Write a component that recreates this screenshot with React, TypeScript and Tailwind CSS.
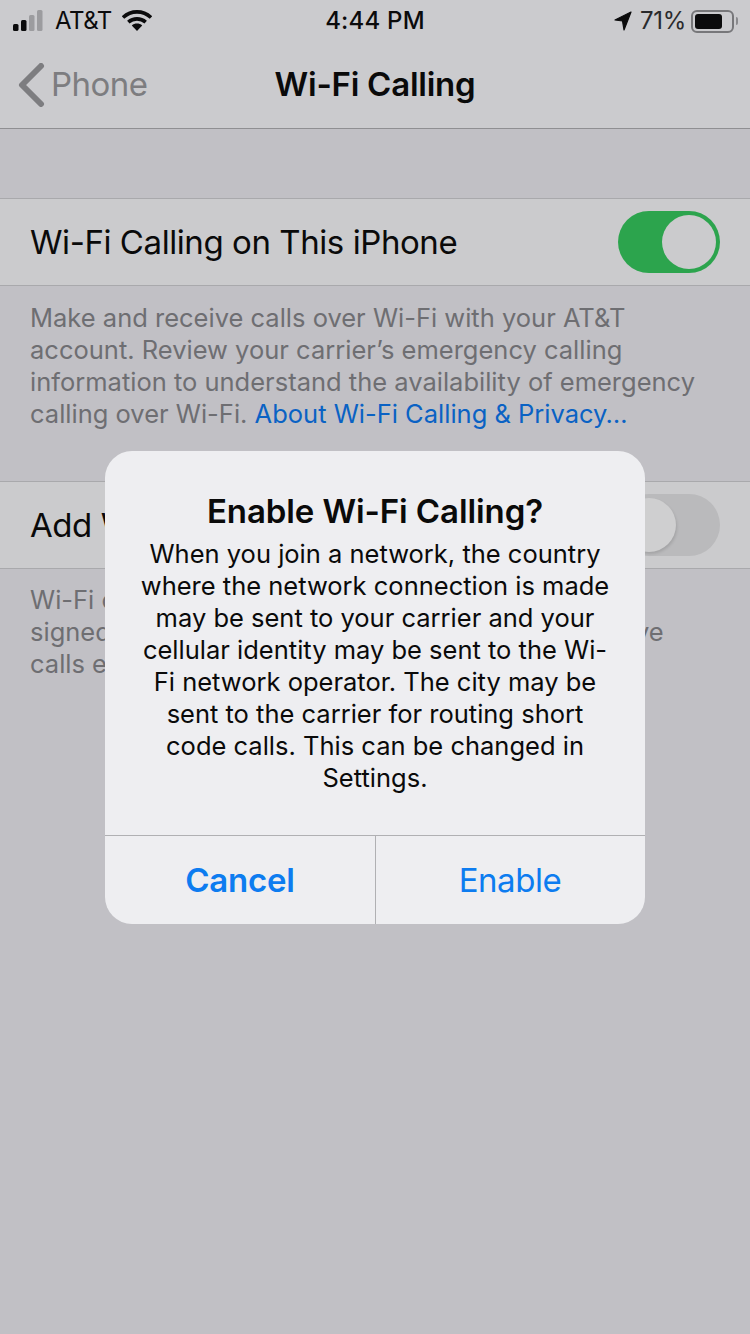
const font = { fontFamily: 'Inter, "Liberation Sans", sans-serif' };

function StatusBar() {
  return (
    <div className="relative flex h-10 items-center justify-between pl-[13px] pr-[12px] pt-[2px] text-[#0b0b0c]">
      <div className="flex items-center">
        <svg width="34" height="24" viewBox="0 0 34 24" className="mr-[8px]">
          <rect x="0" y="15" width="5.5" height="7" rx="1.5" fill="#0b0b0c" />
          <rect x="8" y="11" width="5.5" height="11" rx="1.5" fill="#0b0b0c" />
          <rect x="16" y="6" width="5.5" height="16" rx="1.5" fill="#9c9c9f" />
          <rect x="24" y="1" width="5.5" height="21" rx="1.5" fill="#9c9c9f" />
        </svg>
        <span className="text-[24px] leading-none tracking-[-0.5px]">AT&amp;T</span>
        <svg width="30" height="22" viewBox="0 0 30 22" className="ml-[10px]">
          <path d="M1 7.5 C9 0 21 0 29 7.5" fill="none" stroke="#0b0b0c" strokeWidth="3.6" />
          <path d="M6.3 12.2 C11.3 7.8 18.7 7.8 23.7 12.2" fill="none" stroke="#0b0b0c" strokeWidth="3.6" />
          <path d="M9.8 15.4 C12.6 12.8 17.4 12.8 20.2 15.4 L15 21 Z" fill="#0b0b0c" />
        </svg>
      </div>
      <span className="absolute left-0 right-0 text-center text-[24px] font-medium leading-none tracking-[0.2px]">4:44 PM</span>
      <div className="flex items-center">
        <svg width="18" height="20" viewBox="0 0 18 20" className="mr-[8px]">
          <path d="M17 1 L1 9 L8.5 10 L10 19 Z" fill="#0b0b0c" stroke="#0b0b0c" strokeWidth="1.2" strokeLinejoin="round" />
        </svg>
        <span className="text-[24px] leading-none tracking-[-0.3px] text-[#2a2a2c]">71%</span>
        <div className="ml-[5px] flex h-[23px] w-[43px] items-center rounded-[6px] border-2 border-[#77777a] p-[2px]">
          <div className="h-[15px] w-[27px] rounded-[3px] bg-[#0b0b0c]" />
        </div>
        <div className="ml-[2px] h-[8px] w-[2px] rounded-r-sm bg-[#8a8a8d]" />
      </div>
    </div>
  );
}

function Toggle({ on }: { on: boolean }) {
  return (
    <div className={`relative h-[62px] w-[102px] shrink-0 rounded-full ${on ? "bg-[#2ca44d]" : "bg-[#bababc]"}`}>
      <div className={`absolute top-[4px] h-[54px] w-[54px] rounded-full ${on ? "right-[4px] bg-[#cbcbcd]" : "left-[4px] bg-[#cfcfd0] shadow-[1px_2px_3px_rgba(0,0,0,0.12)]"}`} />
    </div>
  );
}

function Row({ title, on }: { title: string; on: boolean }) {
  return (
    <div className="flex h-[88px] items-center justify-between border-y border-[#a9a9ac] bg-[#cbcbcd] pl-[30px] pr-[30px]">
      <span className="text-[33px] leading-none tracking-[-0.43px] text-[#0a0a0a]">{title}</span>
      <Toggle on={on} />
    </div>
  );
}

function Dialog() {
  const lines = [
    "When you join a network, the country",
    "where the network connection is made",
    "may be sent to your carrier and your",
    "cellular identity may be sent to the Wi-",
    "Fi network operator. The city may be",
    "sent to the carrier for routing short",
    "code calls. This can be changed in",
    "Settings.",
  ];
  return (
    <div className="absolute left-[105px] top-[451px] flex h-[473px] w-[540px] flex-col overflow-hidden rounded-[27px] bg-[#eeeef1]">
      <div className="flex h-[385px] flex-col items-center border-b border-[#b0b0b3] pt-[40px] text-[#0a0a0a]">
        <div className="text-[33px] font-semibold leading-[40px] tracking-[-0.1px]">Enable Wi-Fi Calling?</div>
        <div className="mt-[7px] text-center text-[25.5px] leading-[32px] tracking-[0px]">
          {lines.map((l) => (
            <div key={l} className="whitespace-nowrap">{l}</div>
          ))}
        </div>
      </div>
      <div className="flex flex-1 text-[33px] leading-none text-[#0d7cf0]">
        <div className="flex w-[271px] items-center justify-center border-r border-[#b0b0b3] font-semibold tracking-[-0.2px]">Cancel</div>
        <div className="flex flex-1 items-center justify-center pr-[1px] tracking-[-0.45px]">Enable</div>
      </div>
    </div>
  );
}

export default function App() {
  return (
    <div className="relative h-[1334px] w-[750px] overflow-hidden bg-[#c1c0c5]" style={font}>
      <div className="h-[129px] border-b border-[#8f8f92] bg-[#cbcbce]">
        <StatusBar />
        <div className="relative flex h-[88px] items-center pt-[1px]">
          <svg width="28" height="44" viewBox="0 0 28 44" className="ml-[17px]">
            <path d="M24 3 L5 22 L24 41" fill="none" stroke="#7d7d80" strokeWidth="6" strokeLinecap="round" strokeLinejoin="round" />
          </svg>
          <span className="ml-[6px] text-[33px] leading-none tracking-[-0.55px] text-[#7d7d80]">Phone</span>
          <span className="absolute left-0 right-0 text-center text-[33px] font-semibold leading-none tracking-[-0.25px] text-[#0a0a0a]">Wi-Fi Calling</span>
        </div>
      </div>

      <div className="mt-[69px]">
        <Row title="Wi-Fi Calling on This iPhone" on />
      </div>
      <div className="h-[195px] overflow-hidden whitespace-nowrap pl-[30px] pt-[16px] text-[25.5px] leading-[32px] tracking-[0px] text-[#6e6e72]">
        <div>Make and receive calls over Wi-Fi with your AT&amp;T</div>
        <div>account. Review your carrier’s emergency calling</div>
        <div>information to understand the availability of emergency</div>
        <div>
          calling over Wi-Fi. <span className="text-[#0a62c4]">About Wi-Fi Calling &amp; Privacy…</span>
        </div>
      </div>
      <Row title="Add Wi-Fi Calling For Other Devices" on={false} />
      <div className="overflow-hidden whitespace-nowrap pl-[30px] pt-[15px] text-[25.5px] leading-[32px] tracking-[0px] text-[#6e6e72]">
        <div>Wi-Fi calling on other devices lets you make and</div>
        <div>signed in to your iCloud account and they don’t have</div>
        <div>calls everywhere.</div>
      </div>

      <Dialog />
    </div>
  );
}
